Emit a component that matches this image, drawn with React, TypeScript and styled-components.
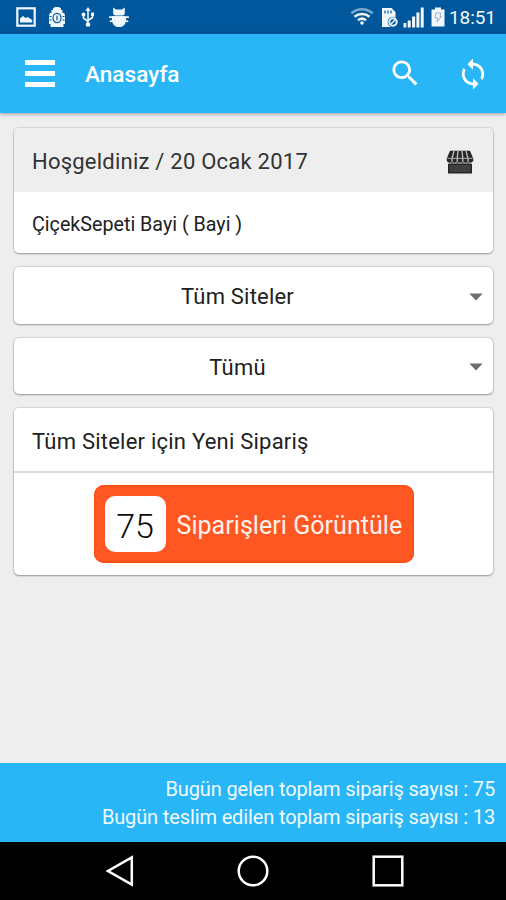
import React from "react";
import styled, { createGlobalStyle } from "styled-components";

const GlobalStyle = createGlobalStyle`
  *, *::before, *::after { box-sizing: border-box; }
  html, body { margin: 0; padding: 0; background: #eeeeee; }
  body { font-family: Roboto, "Noto Sans", sans-serif; overflow: hidden; }
  button { font: inherit; border: 0; padding: 0; background: none; color: inherit; }
`;

const Screen = styled.div`
  width: 506px;
  height: 900px;
  display: flex;
  flex-direction: column;
  background: #eeeeee;
`;

const StatusBar = styled.header`
  flex: none;
  height: 34px;
  padding: 0 10px 0 16px;
  display: flex;
  align-items: center;
  justify-content: space-between;
  background: #01579b;
  color: #f1f7fc;
`;

const IconRow = styled.div<{ $gap: number }>`
  display: flex;
  align-items: center;
  gap: ${(p) => p.$gap}px;
  svg { display: block; }
`;

const Clock = styled.span`
  width: 47px;
  font-size: 19px;
  line-height: 34px;
  letter-spacing: -0.1px;
  white-space: nowrap;
  padding-top: 2px;
`;

const AppBar = styled.nav`
  flex: none;
  height: 79px;
  padding: 0 21px 0 25px;
  display: flex;
  align-items: center;
  background: #29b6f6;
  color: #ffffff;
  box-shadow: 0 1px 4px rgba(0, 0, 0, 0.35);
`;

const MenuButton = styled.button`
  width: 30px;
  height: 27px;
  display: flex;
  flex-direction: column;
  justify-content: space-between;
`;

const MenuLine = styled.span`
  height: 5px;
  background: #ffffff;
`;

const Title = styled.h1`
  flex: 1;
  margin: 3px 0 0 30px;
  font-size: 22.6px;
  font-weight: 500;
  line-height: 30px;
`;

const Content = styled.main`
  flex: 1;
  padding: 15px 13px 0 14px;
  display: flex;
  flex-direction: column;
  gap: 14px;
`;

const Card = styled.section<{ $height: number }>`
  height: ${(p) => p.$height}px;
  flex: none;
  display: flex;
  flex-direction: column;
  overflow: hidden;
  border-radius: 5px;
  background: #ffffff;
  box-shadow: 0 0 1px 1px rgba(0, 0, 0, 0.1), 0 1px 2px rgba(0, 0, 0, 0.3);
`;

const CardRow = styled.div<{ $height: number; $shaded?: boolean; $divided?: boolean }>`
  height: ${(p) => p.$height}px;
  flex: none;
  padding: 4px 19px 0 18px;
  display: flex;
  align-items: center;
  justify-content: space-between;
  background: ${(p) => (p.$shaded ? "#eeeeee" : "#ffffff")};
  border-bottom: ${(p) => (p.$divided ? "2px solid #dcdcdc" : "0")};
`;

const Label = styled.span<{ $size: number; $spacing?: number; $tone?: string }>`
  font-size: ${(p) => p.$size}px;
  line-height: 30px;
  letter-spacing: ${(p) => p.$spacing ?? 0}px;
  color: ${(p) => p.$tone ?? "#212121"};
  white-space: nowrap;
`;

const Select = styled.button`
  flex: 1;
  padding: 2px 10px 0 12px;
  display: grid;
  grid-template-columns: 1fr 14px;
  align-items: center;
  text-align: center;
`;

const SelectValue = styled(Label)`
  padding: 1px 20px 0 0;
`;

const ActionArea = styled.div`
  flex: 1;
  display: flex;
  justify-content: center;
  padding: 12px 0 0;
`;

const OrdersButton = styled.button`
  width: 320px;
  height: 78px;
  padding: 0 11px;
  display: flex;
  align-items: center;
  gap: 11px;
  border-radius: 10px;
  background: #ff5722;
  box-shadow: inset 0 0 1px 1px #f84a12;
`;

const OrdersLabel = styled(Label)`
  padding-top: 4px;
`;

const Count = styled.span`
  width: 61px;
  height: 56px;
  border-radius: 10px;
  background: #ffffff;
  color: #0c0c0c;
  font-size: 34px;
  line-height: 60px;
  font-weight: 300;
  text-align: center;
`;

const Summary = styled.footer`
  flex: none;
  height: 79px;
  padding: 12px 11px 0 0;
  background: #29b6f6;
  color: #f0faff;
  text-align: right;
`;

const SummaryLine = styled.p`
  margin: 0;
  font-size: 20px;
  line-height: 28px;
  letter-spacing: -0.13px;
  white-space: nowrap;
`;

const NavBar = styled.div`
  flex: none;
  height: 58px;
  padding: 0 102px 0 105px;
  display: flex;
  align-items: center;
  justify-content: space-between;
  background: #000000;
  svg { display: block; }
`;

const PictureIcon = () => (
  <svg width="20" height="20" viewBox="0 0 20 20">
    <rect x="1.3" y="1.3" width="17.4" height="17.4" fill="none" stroke="currentColor" strokeWidth="2.2" />
    <path d="M4 15.500V11.500l3-2.500 2.600 2 2-1 4.600 3v2.500z" fill="currentColor" />
  </svg>
);

const DebugIcon = () => (
  <svg width="18" height="22" viewBox="0 0 18 22">
    <path d="M5 4V2.500L7 1h4l2 1.500V4h1.500v3h2v2H17v9h-1.500v3h-13v-3H1V9h.5V7h2V4z" fill="currentColor" />
    <ellipse cx="9" cy="12" rx="4" ry="4.700" fill="none" stroke="#01579b" strokeWidth="1.200" />
    <path d="M9 9.500v5M1.500 10.500h2M1.500 14h2M14.500 10.500h2M14.500 14h2" stroke="#01579b" strokeWidth="1.200" />
  </svg>
);

const UsbIcon = () => (
  <svg width="18" height="22" viewBox="-3 0 18 22" fill="none" stroke="currentColor" strokeWidth="1.600">
    <path d="M7 4v14M2.500 8v4L7 15.500M11.500 8.500v3L7 14.500" />
    <path d="M7 1l2.600 4H4.400zM10 6.500h3v3.500h-3z" fill="currentColor" stroke="none" />
    <circle cx="2.500" cy="8.500" r="1.900" fill="currentColor" stroke="none" />
    <circle cx="7" cy="18.500" r="2.300" fill="currentColor" stroke="none" />
  </svg>
);

const CatDroidIcon = () => (
  <svg width="21" height="21" viewBox="-1 0 21 21" fill="currentColor">
    <path d="M4.200.5L7 2.500h6L15.800.5v5.800q0 2.300-2.500 2.300H6.700q-2.500 0-2.500-2.300z" />
    <path d="M3 9.300h14v5.200q-1.500 4.500-5 5.500H8q-3.500-1-5-5.500z" />
    <path d="M.8 10.200h18.400M1.500 14.300l3-.6M18.500 14.300l-3-.6" stroke="currentColor" strokeWidth="1.800" strokeLinecap="round" />
  </svg>
);

const WifiIcon = () => (
  <svg width="27" height="20" viewBox="0 1 27 20" fill="none" stroke="currentColor" strokeWidth="2.500">
    <path d="M1.300 7.300a16 16 0 0 1 21.400 0" opacity=".5" />
    <path d="M4.500 10.800a11.500 11.500 0 0 1 15 0M8 14.200a6.500 6.500 0 0 1 8 0" />
    <circle cx="12" cy="17" r="1.800" fill="currentColor" stroke="none" />
  </svg>
);

const SimIcon = () => (
  <svg width="18" height="21" viewBox="0 0 18 21">
    <path d="M1 1h9.500l4 4v15H1z" fill="currentColor" />
    <path d="M4 3.500v3M7 3.500v3M10 3.500v3" stroke="#01579b" strokeWidth="1.200" />
    <circle cx="12" cy="15" r="5.300" fill="#01579b" />
    <circle cx="12" cy="15" r="3.700" fill="#01579b" stroke="currentColor" strokeWidth="2" />
    <path d="M10 17l4-4" stroke="currentColor" strokeWidth="1.500" />
  </svg>
);

const SignalIcon = () => (
  <svg width="24" height="21" viewBox="0 0 24 21" fill="currentColor">
    <path d="M.5 16h2.800v4.500H.5zM4.700 13.500h3v7h-3zM9.100 9.500h3v11h-3zM13.400 5.500h3v15h-3zM17.700.5h3v20h-3z" />
  </svg>
);

const BatteryIcon = () => (
  <svg width="14" height="20" viewBox="0 0 14 20">
    <path d="M4 .5h6v2h3.500v17H.5v-17H4z" fill="currentColor" />
    <path d="M5 6h5l-1 3.500h1.500L6 15l1-4H4z" fill="none" stroke="#9db4c8" strokeWidth="1" />
  </svg>
);

const SearchIcon = () => (
  <svg width="26" height="26" viewBox="2.7 3.4 18.2 18.2" fill="#fff">
    <path d="M15.5 14h-.79l-.28-.27C15.410 12.590 16 11.110 16 9.500 16 5.910 13.090 3 9.500 3S3 5.910 3 9.500 5.910 16 9.500 16c1.610 0 3.090-.59 4.230-1.570l.27.28v.79l5 4.990L20.490 19l-4.990-5zm-6 0C7.010 14 5 11.990 5 9.500S7.010 5 9.500 5 14 7.010 14 9.500 11.990 14 9.500 14z" overflow="visible" />
  </svg>
);

const SyncIcon = () => (
  <svg width="24" height="32" viewBox="3.43 0.57 17.14 22.86" fill="#fff">
    <path d="M12 4V1L8 5l4 4V6c3.310 0 6 2.690 6 6 0 1.010-.25 1.970-.7 2.800l1.460 1.460C19.540 15.030 20 13.570 20 12c0-4.420-3.580-8-8-8zm0 14c-3.310 0-6-2.690-6-6 0-1.010.25-1.970.7-2.800L5.240 7.740C4.460 8.970 4 10.430 4 12c0 4.420 3.580 8 8 8v3l4-4-4-4v3z" />
  </svg>
);

const SearchButton = styled.button`
  display: block;
  svg { overflow: visible; }
`;

const StoreIcon = () => (
  <svg width="28" height="24" viewBox="0 0 28 24">
    <path d="M4 .8h20l3.300 8v2q-1.300 2.700-3.800 2.700h-19Q1.600 13.500.7 10.800v-2z" fill="#262626" />
    <path d="M8 .8L6 8.500v3M12 .8l-.8 7.700v3M16 .8l.8 7.700v3M20 .8l2 7.700v3" fill="none" stroke="#c4c4c4" strokeWidth="1.300" />
    <path d="M1.500 8.300h25M1.500 11.500q2.200 3.200 4.500 0 2.600 3.200 5.200 0 2.800 3.200 5.600 0 2.600 3.200 5.200 0 2.100 3.200 4.300 0" fill="none" stroke="#b0b0b0" strokeWidth="1" />
    <path d="M2 13.800h24V23.500H2z" fill="#262626" />
    <path d="M3.500 15h21v7h-21z" fill="#404040" />
  </svg>
);

const CaretIcon = () => (
  <svg width="14" height="8" viewBox="0 0 14 8">
    <path d="M.3.500h13.400L7 7.500z" fill="#6e6e6e" />
  </svg>
);

const BackIcon = () => (
  <svg width="29" height="32" viewBox="0 0 29 32">
    <path d="M26.800 2.500v27L3 16z" fill="none" stroke="#fff" strokeWidth="2.500" />
  </svg>
);

const HomeIcon = () => (
  <svg width="32" height="32" viewBox="0 0 32 32">
    <circle cx="16" cy="16" r="14.300" fill="none" stroke="#fff" strokeWidth="2.500" />
  </svg>
);

const RecentIcon = () => (
  <svg width="32" height="32" viewBox="0 0 32 32">
    <rect x="1.700" y="1.700" width="28.600" height="28.600" fill="none" stroke="#fff" strokeWidth="2.500" />
  </svg>
);

const filters = [
  { value: "Tüm Siteler", height: 57 },
  { value: "Tümü", height: 56 },
];

const summary = [
  "Bugün gelen toplam sipariş sayısı : 75",
  "Bugün teslim edilen toplam sipariş sayısı : 13",
];

export default function App() {
  return (
    <>
      <GlobalStyle />
      <Screen>
        <StatusBar>
          <IconRow $gap={12}>
            <PictureIcon />
            <DebugIcon />
            <UsbIcon />
            <CatDroidIcon />
          </IconRow>
          <IconRow $gap={4}>
            <WifiIcon />
            <SimIcon />
            <SignalIcon />
            <BatteryIcon />
            <Clock>18:51</Clock>
          </IconRow>
        </StatusBar>
        <AppBar>
          <MenuButton aria-label="Menü">
            <MenuLine />
            <MenuLine />
            <MenuLine />
          </MenuButton>
          <Title>Anasayfa</Title>
          <IconRow $gap={43}>
            <SearchButton aria-label="Ara">
              <SearchIcon />
            </SearchButton>
            <SyncIcon />
          </IconRow>
        </AppBar>
        <Content>
          <Card $height={125}>
            <CardRow $height={64} $shaded>
              <Label $size={22} $spacing={0.23} $tone="#333333">Hoşgeldiniz / 20 Ocak 2017</Label>
              <StoreIcon />
            </CardRow>
            <CardRow $height={61}>
              <Label $size={19.7}>ÇiçekSepeti Bayi ( Bayi )</Label>
            </CardRow>
          </Card>
          {filters.map(({ value, height }) => (
            <Card key={value} $height={height}>
              <Select>
                <SelectValue $size={22} $spacing={0.2}>{value}</SelectValue>
                <CaretIcon />
              </Select>
            </Card>
          ))}
          <Card $height={167}>
            <CardRow $height={65} $divided>
              <Label $size={22} $spacing={0.23}>Tüm Siteler için Yeni Sipariş</Label>
            </CardRow>
            <ActionArea>
              <OrdersButton>
                <Count>75</Count>
                <OrdersLabel $size={25} $spacing={0.05} $tone="#fff3ee">Siparişleri Görüntüle</OrdersLabel>
              </OrdersButton>
            </ActionArea>
          </Card>
        </Content>
        <Summary>
          {summary.map((line) => (
            <SummaryLine key={line}>{line}</SummaryLine>
          ))}
        </Summary>
        <NavBar>
          <BackIcon />
          <HomeIcon />
          <RecentIcon />
        </NavBar>
      </Screen>
    </>
  );
}
